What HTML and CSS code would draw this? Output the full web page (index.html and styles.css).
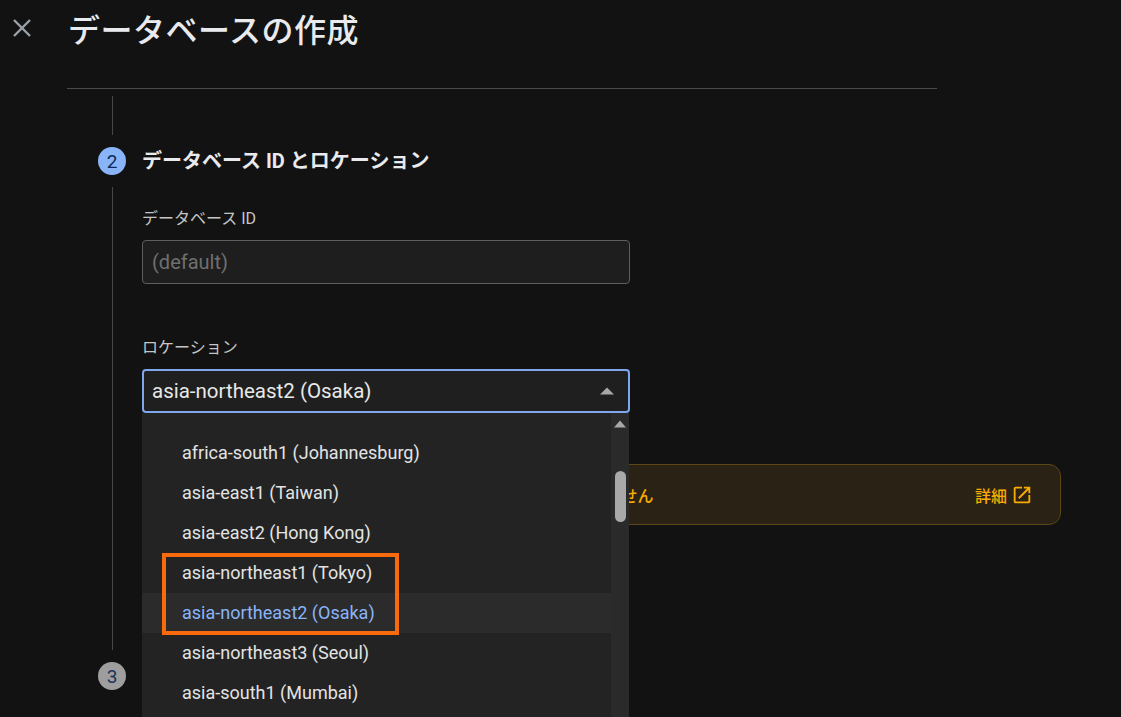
FILE: index.html
```html
<!DOCTYPE html>
<html lang="ja">
<head>
<meta charset="utf-8">
<title>データベースの作成</title>
<link rel="stylesheet" href="styles.css">
</head>
<body>
<header class="topbar">
  <button class="close" aria-label="閉じる">
    <svg width="20" height="20" viewBox="0 0 20 20"><path d="M2 2 L18 18 M18 2 L2 18" stroke="#9aa0a6" stroke-width="2.4" fill="none"/></svg>
  </button>
  <h1 class="title">データベースの作成</h1>
</header>
<main class="sheet">
  <div class="rail-top"></div>
  <section class="step">
    <div class="step-aside">
      <div class="badge badge-active">2</div>
      <div class="rail"></div>
    </div>
    <div class="step-body">
      <h2 class="step-title">データベース ID とロケーション</h2>
      <div class="field-label">データベース ID</div>
      <div class="input">(default)</div>
      <div class="field-label loc-label">ロケーション</div>
      <div class="select-wrap">
        <div class="select">
          <span class="select-value">asia-northeast2 (Osaka)</span>
          <svg class="select-arrow" width="14" height="8" viewBox="0 0 14 8"><path d="M0 7.5 L7 0.5 L14 7.5 Z" fill="#a8a8a8"/></svg>
        </div>
        <div class="dropdown">
          <ul class="options">
            <li class="option">africa-south1 (Johannesburg)</li>
            <li class="option">asia-east1 (Taiwan)</li>
            <li class="option">asia-east2 (Hong Kong)</li>
            <li class="option">asia-northeast1 (Tokyo)</li>
            <li class="option option-selected">asia-northeast2 (Osaka)</li>
            <li class="option">asia-northeast3 (Seoul)</li>
            <li class="option">asia-south1 (Mumbai)</li>
          </ul>
          <div class="scrollbar">
            <svg class="scroll-arrow" width="12" height="8" viewBox="0 0 12 8"><path d="M0 7.5 L6 0.5 L12 7.5 Z" fill="#a8a8a8"/></svg>
            <div class="scroll-thumb"></div>
          </div>
          <div class="callout"></div>
        </div>
      </div>
      <div class="banner">
        <span class="banner-text">データベースのロケーションは、作成後に変更することはできません</span>
        <a class="banner-link" href="#">詳細<svg width="22" height="22" viewBox="0 0 24 24"><path d="M19 19H5V5h7V3H5c-1.11 0-2 .9-2 2v14c0 1.1.89 2 2 2h14c1.1 0 2-.9 2-2v-7h-2v7zM14 3v2h3.59l-9.83 9.83 1.41 1.41L19 6.41V10h2V3h-7z" fill="#f9ab00"/></svg></a>
      </div>
    </div>
  </section>
  <section class="step">
    <div class="step-aside">
      <div class="badge badge-idle">3</div>
    </div>
    <div class="step-body"></div>
  </section>
</main>
</body>
</html>
```
FILE: styles.css
```css
* { box-sizing: border-box; }

html, body {
  margin: 0;
  height: 717px;
  overflow: hidden;
  background: #121212;
  font-family: Roboto, "Noto Sans CJK JP", sans-serif;
  color: #e3e3e3;
}

.topbar {
  display: flex;
  align-items: center;
  height: 56px;
  padding-left: 12px;
  gap: 36px;
}

.close {
  display: flex;
  width: 20px;
  height: 20px;
  padding: 0;
  border: 0;
  background: none;
}

.title {
  margin: 0;
  font-family: "Noto Sans CJK JP", sans-serif;
  font-size: 32px;
  font-weight: 500;
  letter-spacing: 0.5px;
  line-height: 40px;
  color: #e8eaed;
}

.sheet {
  margin-left: 67px;
  margin-top: 32px;
  width: 870px;
  border-top: 1px solid #4a4a4a;
}

.rail-top {
  width: 1px;
  height: 39px;
  margin-top: 7px;
  margin-left: 45px;
  background: #474747;
}

.step {
  display: grid;
  grid-template-columns: 28px 1fr;
  column-gap: 16px;
  padding-left: 31px;
  margin-top: 12px;
}

.step + .step { margin-top: 0; }

.step-aside {
  display: flex;
  flex-direction: column;
  align-items: center;
}

.badge {
  width: 28px;
  height: 28px;
  border-radius: 50%;
  display: flex;
  align-items: center;
  justify-content: center;
  font-size: 19px;
  line-height: 1;
}

.badge-active { background: #8ab4f8; color: #0b2a5a; }
.badge-idle { background: #9e9e9e; color: #1b3358; }

.rail {
  flex: 1;
  width: 1px;
  margin: 12px 0;
  background: #474747;
}

.step-body {
  padding-bottom: 137px;
  min-width: 0;
}

.step-title {
  margin: 0;
  font-size: 20px;
  font-weight: 700;
  line-height: 28px;
  color: #e8eaed;
}

.field-label {
  margin-top: 34px;
  font-size: 16px;
  line-height: 20px;
  color: #c4c7c5;
}

.loc-label { margin-top: 54px; }

.input {
  margin-top: 11px;
  width: 488px;
  height: 44px;
  border: 1px solid #5e5e5e;
  border-radius: 4px;
  background: #1e1e1e;
  padding-left: 9px;
  display: flex;
  align-items: center;
  font-size: 20px;
  color: #6f6f6f;
}

.select-wrap {
  position: relative;
  margin-top: 11px;
  width: 488px;
}

.select {
  height: 44px;
  border: 2px solid #7ea7ee;
  border-radius: 4px;
  background: #1f1f1f;
  padding: 0 14px 0 8px;
  display: flex;
  align-items: center;
  justify-content: space-between;
}

.select-value {
  font-size: 20.5px;
  color: #e8e8e8;
}

.dropdown {
  position: absolute;
  top: 100%;
  left: 0;
  width: 487px;
  height: 320px;
  background: #232323;
  display: flex;
  z-index: 5;
}

.options {
  flex: 1;
  margin: 0;
  padding: 20px 0 0;
  list-style: none;
}

.option {
  height: 40px;
  line-height: 40px;
  padding-left: 40px;
  font-size: 18px;
  color: #e3e3e3;
}

.option-selected {
  background: #2b2b2b;
  color: #8ab4f8;
}

.scrollbar {
  width: 18px;
  background: #2a2a2a;
  display: flex;
  flex-direction: column;
  align-items: center;
  padding-top: 7px;
}

.scroll-arrow { display: block; }

.scroll-thumb {
  margin-top: 43px;
  width: 11px;
  height: 51px;
  border-radius: 6px;
  background: #a9a9a9;
}

.callout {
  position: absolute;
  left: 20px;
  top: 140px;
  width: 237px;
  height: 82px;
  border: 4px solid #f96a0c;
}

.banner {
  margin-top: 51px;
  width: 919px;
  height: 61px;
  border: 1px solid #5a4714;
  border-radius: 12px;
  background: #2a2215;
  padding: 0 27px 0 16px;
  display: flex;
  align-items: center;
  justify-content: space-between;
  color: #f9ab00;
  font-family: "Noto Sans CJK JP", sans-serif;
  font-size: 16px;
  font-weight: 500;
}

.banner-link {
  display: flex;
  align-items: center;
  gap: 4px;
  color: #f9ab00;
  text-decoration: none;
}

.banner-link svg { display: block; }
```
